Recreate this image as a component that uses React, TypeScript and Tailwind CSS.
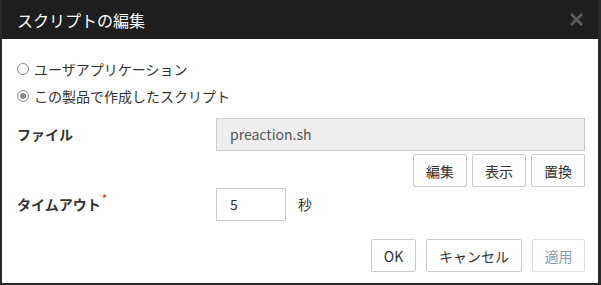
import React from 'react';

const font = { fontFamily: '"Noto Sans CJK JP", "Noto Sans", sans-serif' };

const Radio = ({ checked, label }: { checked?: boolean; label: string }) => (
  <label className="flex items-center h-[20px] text-[14px] leading-[20px] text-[#333]">
    <span className="w-[12px] h-[12px] rounded-full border border-[#8a8a8a] bg-white flex items-center justify-center mr-[5px]">
      {checked && <span className="w-[6px] h-[6px] rounded-full bg-[#888]" />}
    </span>
    {label}
  </label>
);

const Btn = ({ children, w, disabled }: { children: React.ReactNode; w: string; disabled?: boolean }) => (
  <button
    className={
      'h-[33px] border rounded-[2px] bg-white text-[14px] leading-[20px] flex items-center justify-center ' +
      w +
      (disabled ? ' border-[#dcdcdc] text-[#8a9bb0]' : ' border-[#cccccc] text-[#333]')
    }
  >
    {children}
  </button>
);

export default function App() {
  return (
    <div className="w-[601px] h-[285px] bg-[#2a2a2a] pl-[2px] pr-[3px] pb-[2px]" style={font}>
      <div className="h-[283px] bg-white flex flex-col">
        {/* ヘッダー */}
        <div className="h-[39px] bg-[#1e1e1e] flex items-center justify-between pl-[15px] pr-[15px]">
          <span className="text-white text-[16px] leading-[20px]">スクリプトの編集</span>
          <svg width="13" height="13" viewBox="0 0 13 13">
            <path d="M2 2 L11 11 M11 2 L2 11" stroke="#5a5a5a" strokeWidth="3" strokeLinecap="square" />
          </svg>
        </div>

        <div className="flex flex-col pl-[15px] pr-[13px] pt-[20px]">
          <div className="flex flex-col gap-[7px]">
            <Radio label="ユーザアプリケーション" />
            <Radio checked label="この製品で作成したスクリプト" />
          </div>

          {/* ファイル */}
          <div className="flex items-center mt-[12px]">
            <span className="w-[199px] text-[14px] font-bold text-[#333]">ファイル</span>
            <div className="flex-1 h-[33px] border border-[#cccccc] bg-[#eeeeee] px-[13px] flex items-center text-[14px] text-[#555]">
              preaction.sh
            </div>
          </div>
          <div className="flex justify-end gap-[5px] mt-[3px]">
            <Btn w="w-[54px]">編集</Btn>
            <Btn w="w-[54px]">表示</Btn>
            <Btn w="w-[54px]">置換</Btn>
          </div>

          {/* タイムアウト */}
          <div className="flex items-center mt-[1px]">
            <span className="w-[199px] text-[14px] font-bold text-[#333]">
              タイムアウト<sup className="text-[#d9342b] text-[12px] font-normal ml-[1px]">*</sup>
            </span>
            <div className="w-[70px] h-[33px] border border-[#cccccc] bg-white px-[13px] flex items-center text-[14px] text-[#333]">
              5
            </div>
            <span className="ml-[12px] text-[14px] text-[#333]">秒</span>
          </div>

          <div className="flex justify-end gap-[10px] mt-[18px]">
            <Btn w="w-[45px]">OK</Btn>
            <Btn w="w-[96px]">キャンセル</Btn>
            <Btn w="w-[53px]" disabled>適用</Btn>
          </div>
        </div>
      </div>
    </div>
  );
}
